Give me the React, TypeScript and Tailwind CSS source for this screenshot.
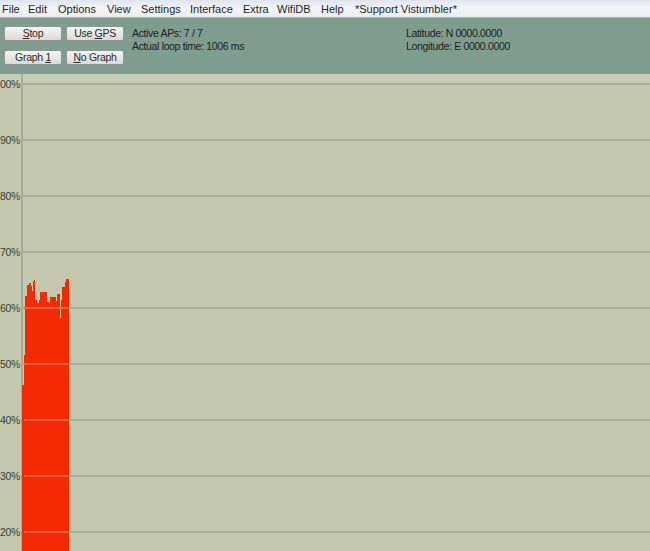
import React from 'react';

const menuItems: { label: string; w: number }[] = [
  { label: 'File', w: 26 },
  { label: 'Edit', w: 30 },
  { label: 'Options', w: 49 },
  { label: 'View', w: 34 },
  { label: 'Settings', w: 49 },
  { label: 'Interface', w: 53 },
  { label: 'Extra', w: 34 },
  { label: 'WifiDB', w: 44 },
  { label: 'Help', w: 34 },
  { label: '*Support Vistumbler*', w: 120 },
];

// top of the signal bar, in page coords: [x, y]
const barTop: [number, number][] = [
  [22, 385], [24, 355], [25, 296], [27, 285], [29, 283], [31, 286], [32, 291],
  [33, 281], [34, 280], [35, 300], [37, 303], [39, 300], [40, 292], [47, 302],
  [49, 303], [50, 297], [56, 301], [57, 294], [60, 318], [61, 300], [62, 287],
  [65, 282], [66, 279], [69, 279],
];

const GRAPH_TOP = 74;
const gridYs = [84, 140, 196, 252, 308, 364, 420, 476, 532];
const labels = ['00%', '90%', '80%', '70%', '60%', '50%', '40%', '30%', '20%'];

function Btn({ pre, u, post }: { pre?: string; u: string; post?: string }) {
  return (
    <button className="w-[58px] h-[15px] rounded-[2px] border border-[#8e9591] bg-gradient-to-b from-[#f4f4f4] to-[#d9dbd9] text-[10.5px] leading-[13px] text-[#2a2a2a] tracking-[-0.3px] whitespace-pre">
      {pre}
      <span className="underline">{u}</span>
      {post}
    </button>
  );
}

function Graph() {
  const h = 551 - GRAPH_TOP;
  let d = '';
  barTop.forEach(([x, y], i) => {
    const yy = y - GRAPH_TOP;
    if (i === 0) d += `M${x} ${h} L${x} ${yy}`;
    else d += ` L${x} ${barTop[i - 1][1] - GRAPH_TOP} L${x} ${yy}`;
  });
  d += ` L69 ${h} Z`;
  return (
    <svg width={650} height={h} className="block">
      <rect x={0} y={0} width={650} height={h} fill="#c4c8af" />
      <rect x={0} y={0} width={650} height={9} fill="#c9cdb5" />
      {gridYs.map(y => (
        <rect key={y} x={22} y={y - GRAPH_TOP - 1} width={628} height={2} fill="#a9ad92" />
      ))}
      <rect x={21} y={0} width={2} height={h} fill="#a9ad92" />
      <path d={d} fill="#f42a02" />
      {gridYs.filter(y => y >= 308).map(y => (
        <rect key={'r' + y} x={24} y={y - GRAPH_TOP - 1} width={45} height={2} fill="#f86440" />
      ))}
      {labels.map((l, i) => (
        <text
          key={l}
          x={0}
          y={gridYs[i] - GRAPH_TOP + 4}
          fontSize={10.5}
          fontFamily="'Liberation Sans', Arial, sans-serif"
          fill="#3a3d36"
          letterSpacing={-0.4}
        >
          {l}
        </text>
      ))}
    </svg>
  );
}

export default function App() {
  return (
    <div className="w-[650px] h-[551px] overflow-hidden flex flex-col font-['Liberation_Sans',Arial,sans-serif] bg-[#c4c8af]">
      {/* Menu bar */}
      <div className="h-[18px] shrink-0 flex items-center pl-[2px] pt-[1px] bg-gradient-to-b from-[#dfe4ee] via-[#f3f4f7] to-[#eceef1] border-b border-[#a9b0b4] text-[11px] text-[#1e1e1e]">
        {menuItems.map(m => (
          <span key={m.label} className="shrink-0 whitespace-nowrap" style={{ width: m.w }}>
            {m.label}
          </span>
        ))}
      </div>

      {/* Toolbar */}
      <div className="h-[56px] shrink-0 bg-[#7f9d8e] flex items-start pt-[8px] pl-[4px] text-[#1c211e]">
        <div className="grid grid-cols-2 gap-x-[4px] gap-y-[9px]">
          <Btn u="S" post="top" />
          <Btn pre="Use " u="G" post="PS" />
          <Btn pre="Graph " u="1" />
          <Btn u="N" post="o Graph" />
        </div>
        <div className="ml-[8px] mt-[1px] text-[10.5px] leading-[12.5px] tracking-[-0.35px]">
          <div>Active APs: 7 / 7</div>
          <div>Actual loop time: 1006 ms</div>
        </div>
        <div className="ml-[162px] mt-[1px] text-[10.5px] leading-[12.5px] tracking-[-0.35px]">
          <div>Latitude: N 0000.0000</div>
          <div>Longitude: E 0000.0000</div>
        </div>
      </div>

      {/* Graph */}
      <div className="flex-1 overflow-hidden">
        <Graph />
      </div>
    </div>
  );
}
